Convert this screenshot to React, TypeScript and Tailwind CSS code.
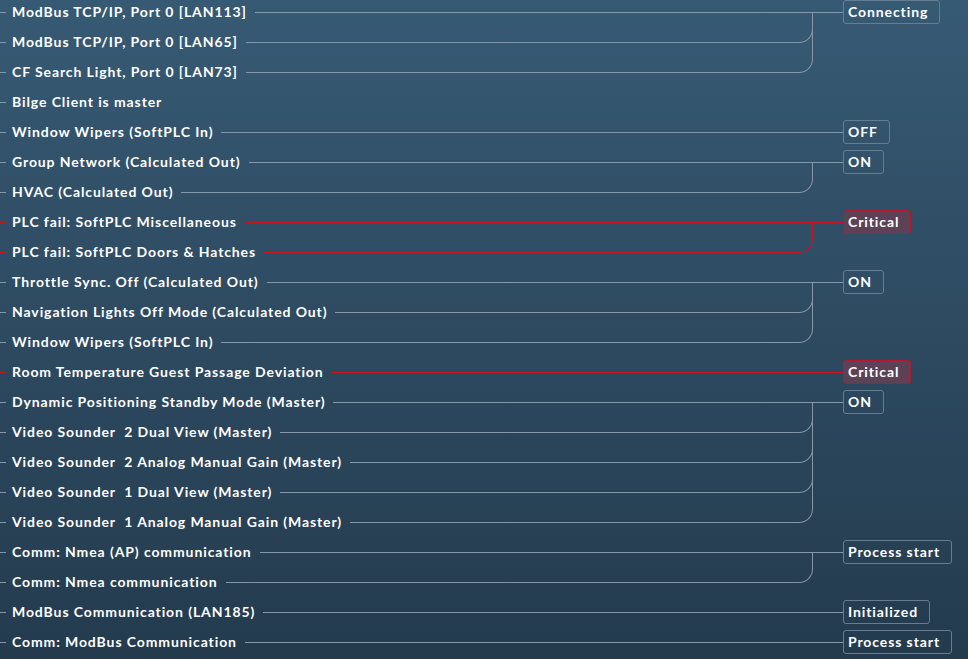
import React from "react";

type Group = { rows: string[]; badge: string | null; critical?: boolean };

const groups: Group[] = [
  { rows: ["ModBus TCP/IP, Port 0 [LAN113]", "ModBus TCP/IP, Port 0 [LAN65]", "CF Search Light, Port 0 [LAN73]"], badge: "Connecting" },
  { rows: ["Bilge Client is master"], badge: null },
  { rows: ["Window Wipers (SoftPLC In)"], badge: "OFF" },
  { rows: ["Group Network (Calculated Out)", "HVAC (Calculated Out)"], badge: "ON" },
  { rows: ["PLC fail: SoftPLC Miscellaneous", "PLC fail: SoftPLC Doors & Hatches"], badge: "Critical", critical: true },
  { rows: ["Throttle Sync. Off (Calculated Out)", "Navigation Lights Off Mode (Calculated Out)", "Window Wipers (SoftPLC In)"], badge: "ON" },
  { rows: ["Room Temperature Guest Passage Deviation"], badge: "Critical", critical: true },
  {
    rows: [
      "Dynamic Positioning Standby Mode (Master)",
      "Video Sounder  2 Dual View (Master)",
      "Video Sounder  2 Analog Manual Gain (Master)",
      "Video Sounder  1 Dual View (Master)",
      "Video Sounder  1 Analog Manual Gain (Master)",
    ],
    badge: "ON",
  },
  { rows: ["Comm: Nmea (AP) communication", "Comm: Nmea communication"], badge: "Process start" },
  { rows: ["ModBus Communication (LAN185)"], badge: "Initialized" },
  { rows: ["Comm: ModBus Communication"], badge: "Process start" },
];

function Row({ text, idx, count, hasBadge, critical }: { text: string; idx: number; count: number; hasBadge: boolean; critical?: boolean }) {
  const c = critical ? "border-[#c8141e]" : "border-[#8797a6]";
  let cell: React.ReactNode = null;
  if (hasBadge) {
    if (count === 1) {
      cell = <div className={`flex-1 self-start h-[15px] border-b ${c}`} />;
    } else if (idx === 0) {
      cell = (
        <div className="flex-1 flex flex-col">
          <div className={`h-[15px] border-b ${c}`} />
          <div className={`flex-1 border-r ${c}`} />
        </div>
      );
    } else if (idx < count - 1) {
      cell = (
        <div className={`flex-1 flex flex-col border-r ${c}`}>
          <div className={`h-[15px] -mr-px border-b border-r rounded-br-[14px] ${c}`} />
        </div>
      );
    } else {
      cell = <div className={`flex-1 self-start h-[15px] border-b border-r rounded-br-[14px] ${c}`} />;
    }
  }
  return (
    <div className="flex h-[30px]">
      <div className={`self-start h-[15px] w-[6px] border-b ${c}`} />
      <div className="self-center mb-[2px] ml-[6px] mr-[8px] text-[14px] leading-none font-bold text-white whitespace-pre tracking-[0.9px]">
        {text}
      </div>
      {cell}
    </div>
  );
}

export default function App() {
  return (
    <div className="w-[968px] h-[659px] overflow-hidden bg-gradient-to-b from-[#375a74] to-[#243b4e] font-['Lato','Noto_Sans',sans-serif]">
      <div className="-mt-[2px] flex flex-col">
        {groups.map((g, gi) => (
          <div key={gi} className="flex">
            <div className="w-[813px] flex flex-col">
              {g.rows.map((r, i) => (
                <Row key={i} text={r} idx={i} count={g.rows.length} hasBadge={!!g.badge} critical={g.critical} />
              ))}
            </div>
            {g.badge && (
              <div className="flex items-start">
                <div className={`w-[30px] h-[15px] border-b ${g.critical ? "border-[#c8141e]" : "border-[#8797a6]"}`} />
                <div
                  className={`mt-[2px] h-[24px] flex items-center pb-[1px] pl-[4px] pr-[11px] rounded-[3px] border text-[14px] leading-none font-bold text-white tracking-[0.9px] ${
                    g.critical ? "bg-[#5c4157] border-[#b31b2b]" : "border-[#667d91]"
                  }`}
                >
                  {g.badge}
                </div>
              </div>
            )}
          </div>
        ))}
      </div>
    </div>
  );
}
